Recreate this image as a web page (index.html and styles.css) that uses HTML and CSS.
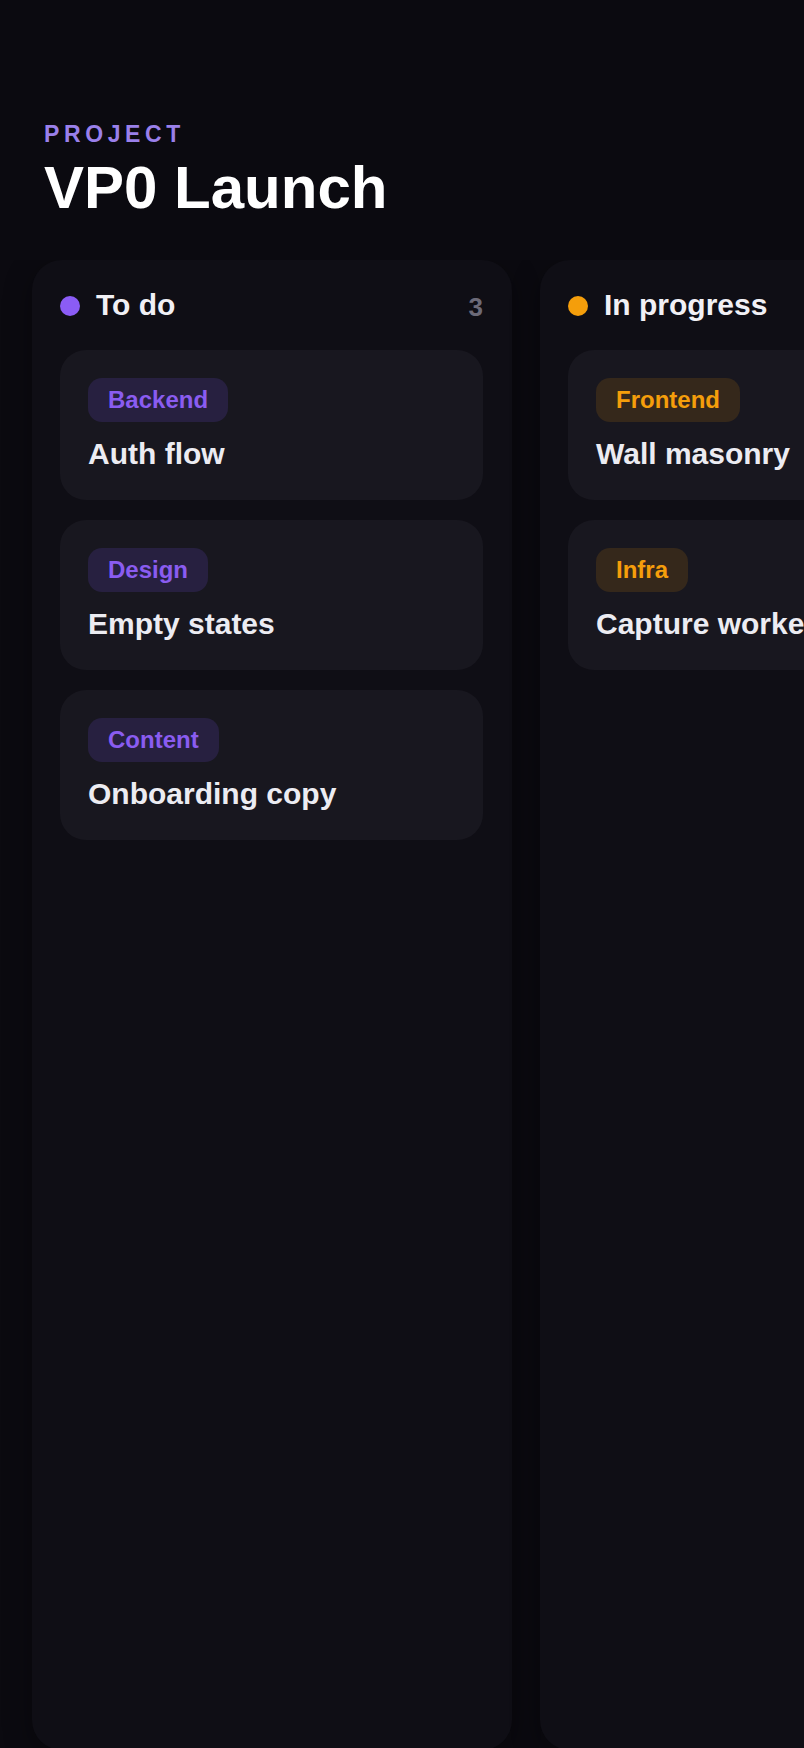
FILE: index.html
```html
<!DOCTYPE html>
<html lang="en">
<head>
<meta charset="utf-8">
<title>VP0 Launch</title>
<link rel="stylesheet" href="styles.css">
</head>
<body>
<main class="page">
  <header class="head">
    <div class="eyebrow">PROJECT</div>
    <h1 class="title">VP0 Launch</h1>
  </header>
  <section class="board">
    <div class="column">
      <div class="col-head">
        <span class="dot dot-purple"></span>
        <span class="col-name">To do</span>
        <span class="count">3</span>
      </div>
      <div class="cards">
        <div class="card">
          <span class="tag tag-purple">Backend</span>
          <div class="card-title">Auth flow</div>
        </div>
        <div class="card">
          <span class="tag tag-purple">Design</span>
          <div class="card-title">Empty states</div>
        </div>
        <div class="card">
          <span class="tag tag-purple">Content</span>
          <div class="card-title">Onboarding copy</div>
        </div>
      </div>
    </div>
    <div class="column">
      <div class="col-head">
        <span class="dot dot-orange"></span>
        <span class="col-name">In progress</span>
        <span class="count">2</span>
      </div>
      <div class="cards">
        <div class="card">
          <span class="tag tag-orange">Frontend</span>
          <div class="card-title">Wall masonry</div>
        </div>
        <div class="card">
          <span class="tag tag-orange">Infra</span>
          <div class="card-title">Capture worker</div>
        </div>
      </div>
    </div>
  </section>
</main>
</body>
</html>
```

FILE: styles.css
```css
* { box-sizing: border-box; }
html, body {
  margin: 0;
  padding: 0;
  background: #0b0a10;
  height: 1748px;
  overflow: hidden;
}
body {
  font-family: "Liberation Sans", Arial, sans-serif;
  color: #f1f0f5;
}
.page {
  padding-top: 121px;
}
.head {
  padding-left: 44px;
}
.eyebrow {
  font-size: 23px;
  line-height: 26px;
  font-weight: 700;
  letter-spacing: 0.2em;
  color: #9a80ea;
  margin-bottom: 8px;
}
.title {
  margin: 0;
  font-size: 60px;
  line-height: 66px;
  font-weight: 700;
  letter-spacing: 0;
  color: #ffffff;
}
.board {
  margin-top: 39px;
  display: flex;
  gap: 28px;
  padding-left: 32px;
  overflow: hidden;
}
.column {
  flex: 0 0 480px;
  height: 1490px;
  background: #0f0e15;
  border-radius: 30px;
  padding: 28px 29px 28px 28px;
  box-shadow: 0 8px 28px rgba(0, 0, 0, 0.35);
}
.col-head {
  display: flex;
  align-items: center;
  height: 34px;
  margin-bottom: 28px;
}
.dot {
  width: 20px;
  height: 20px;
  border-radius: 50%;
  flex: 0 0 20px;
  margin-right: 16px;
  margin-top: 2px;
}
.dot-purple { background: #8b5cf6; }
.dot-orange { background: #f59e0b; }
.col-name {
  font-size: 30px;
  line-height: 34px;
  font-weight: 700;
  color: #f1f0f5;
  flex: 1;
}
.count {
  font-size: 26px;
  line-height: 34px;
  font-weight: 700;
  color: #6c6a78;
  padding-top: 3px;
}
.cards {
  display: flex;
  flex-direction: column;
  gap: 20px;
}
.card {
  background: #18171f;
  border-radius: 26px;
  padding: 28px;
  display: flex;
  flex-direction: column;
  align-items: flex-start;
}
.tag {
  display: inline-flex;
  align-items: center;
  height: 44px;
  padding: 0 20px;
  border-radius: 14px;
  font-size: 24px;
  font-weight: 700;
  margin-bottom: 13px;
}
.tag-purple {
  background: #272040;
  color: #8a5cf0;
}
.tag-orange {
  background: #35281b;
  color: #f59e0b;
}
.card-title {
  font-size: 30px;
  line-height: 37px;
  font-weight: 700;
  color: #ececf2;
  white-space: nowrap;
}
```
